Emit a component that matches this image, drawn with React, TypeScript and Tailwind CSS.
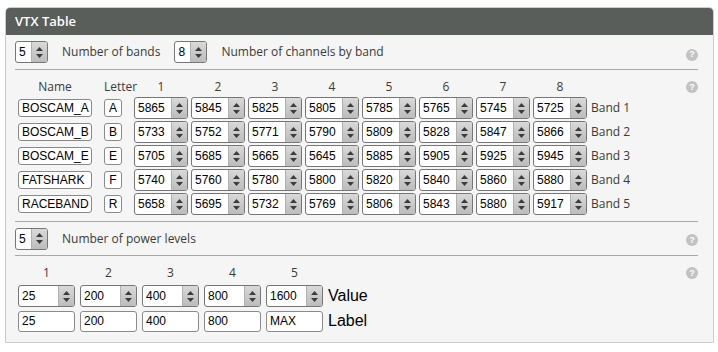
import React from 'react'

const bands = [
  { name: 'BOSCAM_A', letter: 'A', freqs: [5865, 5845, 5825, 5805, 5785, 5765, 5745, 5725] },
  { name: 'BOSCAM_B', letter: 'B', freqs: [5733, 5752, 5771, 5790, 5809, 5828, 5847, 5866] },
  { name: 'BOSCAM_E', letter: 'E', freqs: [5705, 5685, 5665, 5645, 5885, 5905, 5925, 5945] },
  { name: 'FATSHARK', letter: 'F', freqs: [5740, 5760, 5780, 5800, 5820, 5840, 5860, 5880] },
  { name: 'RACEBAND', letter: 'R', freqs: [5658, 5695, 5732, 5769, 5806, 5843, 5880, 5917] },
]

const powers = [
  { value: '25', label: '25' },
  { value: '200', label: '200' },
  { value: '400', label: '400' },
  { value: '800', label: '800' },
  { value: '1600', label: 'MAX' },
]

// little up/down arrows of a number input
function Arrows() {
  return (
    <span className="flex w-[16px] flex-col items-center justify-center gap-[3px] border-l border-[#b0b0b0] bg-gradient-to-b from-[#d9d9d9] to-[#bcbcbc]">
      <svg width="7" height="4" viewBox="0 0 7 4">
        <polygon points="0,4 3.5,0 7,4" fill="#3c3c3c" />
      </svg>
      <svg width="7" height="4" viewBox="0 0 7 4">
        <polygon points="0,0 7,0 3.5,4" fill="#3c3c3c" />
      </svg>
    </span>
  )
}

function Spin({ value, className }: { value: string | number; className: string }) {
  return (
    <div className={`flex h-[22px] overflow-hidden rounded-[3px] border border-[#767676] bg-white ${className}`}>
      <span className="flex flex-1 items-center pl-[3px] font-['Liberation_Sans',Arial,sans-serif] text-[12px] text-black">
        {value}
      </span>
      <Arrows />
    </div>
  )
}

function TextBox({ value, className }: { value: string; className: string }) {
  return (
    <div className={`flex items-center rounded-[3px] border border-[#8a8a8a] bg-white font-['Liberation_Sans',Arial,sans-serif] text-[12px] text-black ${className}`}>
      {value}
    </div>
  )
}

function Help() {
  return (
    <span className="flex h-[12px] w-[12px] items-center justify-center rounded-full bg-[#c2c2c2] font-['Liberation_Sans',Arial,sans-serif] text-[9px] font-bold leading-none text-white">
      ?
    </span>
  )
}

export default function App() {
  return (
    <div className="h-[352px] w-[718px] bg-white pl-[5px] pt-[7px] font-['Open_Sans',sans-serif]">
      <div className="h-[336px] w-[709px] overflow-hidden rounded-t-[5px] border border-[#cdcdcd] bg-[#f5f5f5]">
        <div className="flex h-[27px] items-center bg-[#5a5e5b] pl-[9px] text-[13px] font-semibold text-white">
          VTX Table
        </div>

        <div className="pl-[9px] pr-[15px]">
          {/* number of bands / channels */}
          <div className="flex h-[35px] items-center border-b border-[#a9a9a9] text-[12px] text-[#3a3a3a]">
            <Spin value="5" className="w-[33px]" />
            <span className="ml-[14px]">Number of bands</span>
            <Spin value="8" className="ml-[14px] w-[33px]" />
            <span className="ml-[14px]">Number of channels by band</span>
            <span className="ml-auto mt-[5px]">
              <Help />
            </span>
          </div>

          {/* band table */}
          <div className="flex h-[152px] border-b border-[#a9a9a9] pt-[9px]">
            <div className="flex flex-col gap-[2px]">
              <div className="flex h-[16px] items-center pl-[3px] text-[12px] text-[#3a3a3a]">
                <span className="w-[74px] text-center">Name</span>
                <span className="ml-[12px] w-[18px] text-center">Letter</span>
                <div className="ml-[12px] flex gap-[3px]">
                  {[1, 2, 3, 4, 5, 6, 7, 8].map((n) => (
                    <span key={n} className="w-[54px] text-center">
                      {n}
                    </span>
                  ))}
                </div>
              </div>
              <div className="flex flex-col gap-[2px]">
                {bands.map((b, i) => (
                  <div key={b.name} className="flex h-[22px] items-center pl-[3px]">
                    <TextBox value={b.name} className="h-[18px] w-[74px] pl-[3px]" />
                    <TextBox value={b.letter} className="ml-[12px] h-[18px] w-[18px] justify-center" />
                    <div className="ml-[12px] flex gap-[3px]">
                      {b.freqs.map((f, j) => (
                        <Spin key={j} value={f} className="w-[54px]" />
                      ))}
                    </div>
                    <span className="ml-[4px] text-[12px] text-[#3a3a3a]">Band {i + 1}</span>
                  </div>
                ))}
              </div>
            </div>
            <span className="ml-auto mt-[2px]">
              <Help />
            </span>
          </div>

          {/* number of power levels */}
          <div className="flex h-[34px] items-center border-b border-[#a9a9a9] text-[12px] text-[#3a3a3a]">
            <Spin value="5" className="w-[33px]" />
            <span className="ml-[14px]">Number of power levels</span>
            <span className="ml-auto mt-[3px]">
              <Help />
            </span>
          </div>

          {/* power table */}
          <div className="flex pt-[8px]">
            <div className="flex flex-col pl-[3px]">
              <div className="flex h-[16px] gap-[5px] text-[12px] text-[#3a3a3a]">
                {powers.map((p, i) => (
                  <span key={i} className="w-[57px] text-center">
                    {i + 1}
                  </span>
                ))}
              </div>
              <div className="mt-[4px] flex items-center gap-[5px]">
                {powers.map((p, i) => (
                  <Spin key={i} value={p.value} className="w-[57px]" />
                ))}
                <span className="font-['Liberation_Sans',Arial,sans-serif] text-[16px] text-black">Value</span>
              </div>
              <div className="mt-[1px] flex items-center gap-[5px]">
                {powers.map((p, i) => (
                  <TextBox key={i} value={p.label} className="h-[21px] w-[57px] pl-[3px]" />
                ))}
                <span className="font-['Liberation_Sans',Arial,sans-serif] text-[16px] text-black">Label</span>
              </div>
            </div>
            <span className="ml-auto mt-[3px]">
              <Help />
            </span>
          </div>
        </div>
      </div>
    </div>
  )
}
